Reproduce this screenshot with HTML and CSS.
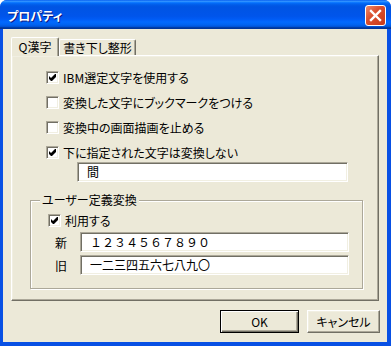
FILE: index.html
```html
<!DOCTYPE html>
<html lang="ja">
<head>
    <meta charset="utf-8">
    <title>プロパティ</title>
    <link rel="stylesheet" href="styles.css">
</head>
<body>
    <div class="window">
        <div class="titlebar">
            <span class="title">プロパティ</span>
            <div class="close">
                <svg width="19" height="19" viewBox="0 0 19 19"><path d="M5 5 L14 14 M14 5 L5 14" stroke="#fff" stroke-width="2.4" stroke-linecap="square"/></svg>
            </div>
        </div>
        <div class="client">
            <div class="tabs">
                <div class="tab active">Q漢字</div>
                <div class="tab other">書き下し整形</div>
            </div>
            <div class="panel">
                <div class="opts">
                    <div class="row"><span class="check"><svg width="11" height="11" viewBox="0 0 11 11"><polygon points="2,4 4,6 8,2 9,2 9,5 5,9 4,9 2,7"/></svg></span>IBM選定文字を使用する</div>
                    <div class="row"><span class="check"></span>変換した文字にブックマークをつける</div>
                    <div class="row"><span class="check"></span>変換中の画面描画を止める</div>
                    <div class="row"><span class="check"><svg width="11" height="11" viewBox="0 0 11 11"><polygon points="2,4 4,6 8,2 9,2 9,5 5,9 4,9 2,7"/></svg></span>下に指定された文字は変換しない</div>
                    <div class="edit edit-wide">間</div>
                </div>
                <fieldset class="group">
                    <legend>ユーザー定義変換</legend>
                    <div class="group-body">
                        <div class="row"><span class="check"><svg width="11" height="11" viewBox="0 0 11 11"><polygon points="2,4 4,6 8,2 9,2 9,5 5,9 4,9 2,7"/></svg></span>利用する</div>
                        <div class="field"><span class="field-label">新</span><div class="edit mono">１２３４５６７８９０</div></div>
                        <div class="field"><span class="field-label">旧</span><div class="edit mono">一二三四五六七八九〇</div></div>
                    </div>
                </fieldset>
            </div>
            <div class="buttons">
                <div class="btn default">OK</div>
                <div class="btn cancel">キャンセル</div>
            </div>
        </div>
    </div>
</body>
</html>
```

FILE: styles.css
```css
* {
    box-sizing: border-box;
}

body {
    margin: 0;
    background: #fff;
}

.window {
    width: 391px;
    height: 346px;
    display: flex;
    flex-direction: column;
    background: #0850E4;
    border-radius: 7px 7px 0 0;
    overflow: hidden;
    font-family: "Noto Sans CJK JP", sans-serif;
    font-size: 12px;
    font-feature-settings: "palt";
    color: #000;
}

.titlebar {
    height: 29px;
    flex: none;
    display: flex;
    align-items: flex-start;
    background: linear-gradient(180deg, #0058EE 0%, #3593FF 4%, #288EFF 6%, #127DFF 8%, #036FFC 10%, #0262EE 14%, #0057E5 20%, #0054E3 24%, #0055EB 56%, #005BF5 66%, #026AFE 76%, #0062EF 86%, #0052D6 92%, #0040AB 94%, #003092 100%);
}

.title {
    margin: 9px 0 0 7px;
    color: #fff;
    font-weight: bold;
    font-size: 12px;
    line-height: 14px;
    text-shadow: 1px 1px #0A1883;
}

.close {
    width: 21px;
    height: 21px;
    margin: 5px 5px 0 auto;
    border: 1px solid #fff;
    border-radius: 3px;
    background: linear-gradient(135deg, #EE8B6C 0%, #DA5030 40%, #C83A19 100%);
}

.close svg {
    display: block;
}

.client {
    flex: 1;
    margin: 0 4px 4px 3px;
    padding: 8px 8px 0;
    background: #ECE9D8;
    display: flex;
    flex-direction: column;
}

.tabs {
    display: flex;
    align-items: flex-end;
    height: 18px;
    position: relative;
    z-index: 1;
}

.tab {
    height: 16px;
    border: 1px solid;
    border-color: #fff #716F64 transparent #fff;
    border-bottom: none;
    border-radius: 2px 2px 0 0;
    box-shadow: inset -1px 0 #ACA899;
    text-align: center;
    line-height: 15px;
    background: #ECE9D8;
}

.tab.active {
    width: 48px;
    height: 19px;
    margin-bottom: -1px;
    line-height: 17px;
}

.tab.other {
    width: 77px;
}

.panel {
    height: 246px;
    border: 1px solid;
    border-color: #fff #716F64 #716F64 #fff;
    box-shadow: inset -1px -1px #ACA899, inset 1px 1px #F1EFE2;
    padding: 15px 0 0 18px;
}

.opts {
    margin-left: 16px;
}

.row {
    display: flex;
    align-items: center;
    height: 13px;
    line-height: 13px;
    white-space: nowrap;
}

.opts .row + .row {
    margin-top: 12px;
}

.check {
    width: 13px;
    height: 13px;
    flex: none;
    margin-right: 4px;
    background: #fff;
    border: 1px solid;
    border-color: #ACA899 #fff #fff #ACA899;
    box-shadow: inset 1px 1px #716F64, inset -1px -1px #F1EFE2;
}

.check svg {
    display: block;
}

.edit {
    height: 20px;
    background: #fff;
    border: 1px solid;
    border-color: #ACA899 #fff #fff #ACA899;
    box-shadow: inset 1px 1px #716F64, inset -1px -1px #F1EFE2;
    padding-left: 9px;
    line-height: 18px;
    white-space: nowrap;
}

.edit.mono {
    font-feature-settings: normal;
}

.edit-wide {
    width: 271px;
    margin: 3px 0 0 31px;
}

.group {
    width: 333px;
    margin: 11px 0 0;
    padding: 0;
    min-width: 0;
    border: 1px solid #ACA899;
    box-shadow: inset 1px 1px #fff, 1px 1px #fff;
}

.group legend {
    margin-left: 9px;
    padding: 0 2px;
    line-height: 14px;
    background: #ECE9D8;
}

.group-body {
    padding: 7px 0 13px 17px;
}

.field {
    display: flex;
    align-items: center;
    margin-top: 3px;
}

.group-body .row + .field {
    margin-top: 5px;
}

.field-label {
    width: 32px;
    padding-left: 7px;
}

.field .edit {
    width: 269px;
}

.buttons {
    display: flex;
    justify-content: flex-end;
    gap: 8px;
    margin: 9px -1px 0 0;
}

.btn {
    height: 23px;
    text-align: center;
    line-height: 21px;
    border: 1px solid;
    border-color: #fff #716F64 #716F64 #fff;
    box-shadow: inset -1px -1px #ACA899, inset 1px 1px #F1EFE2;
}

.btn.default {
    width: 79px;
    border-color: #000;
    box-shadow: inset 1px 1px #fff, inset -1px -1px #716F64, inset -2px -2px #ACA899;
}

.btn.cancel {
    width: 73px;
}
```
